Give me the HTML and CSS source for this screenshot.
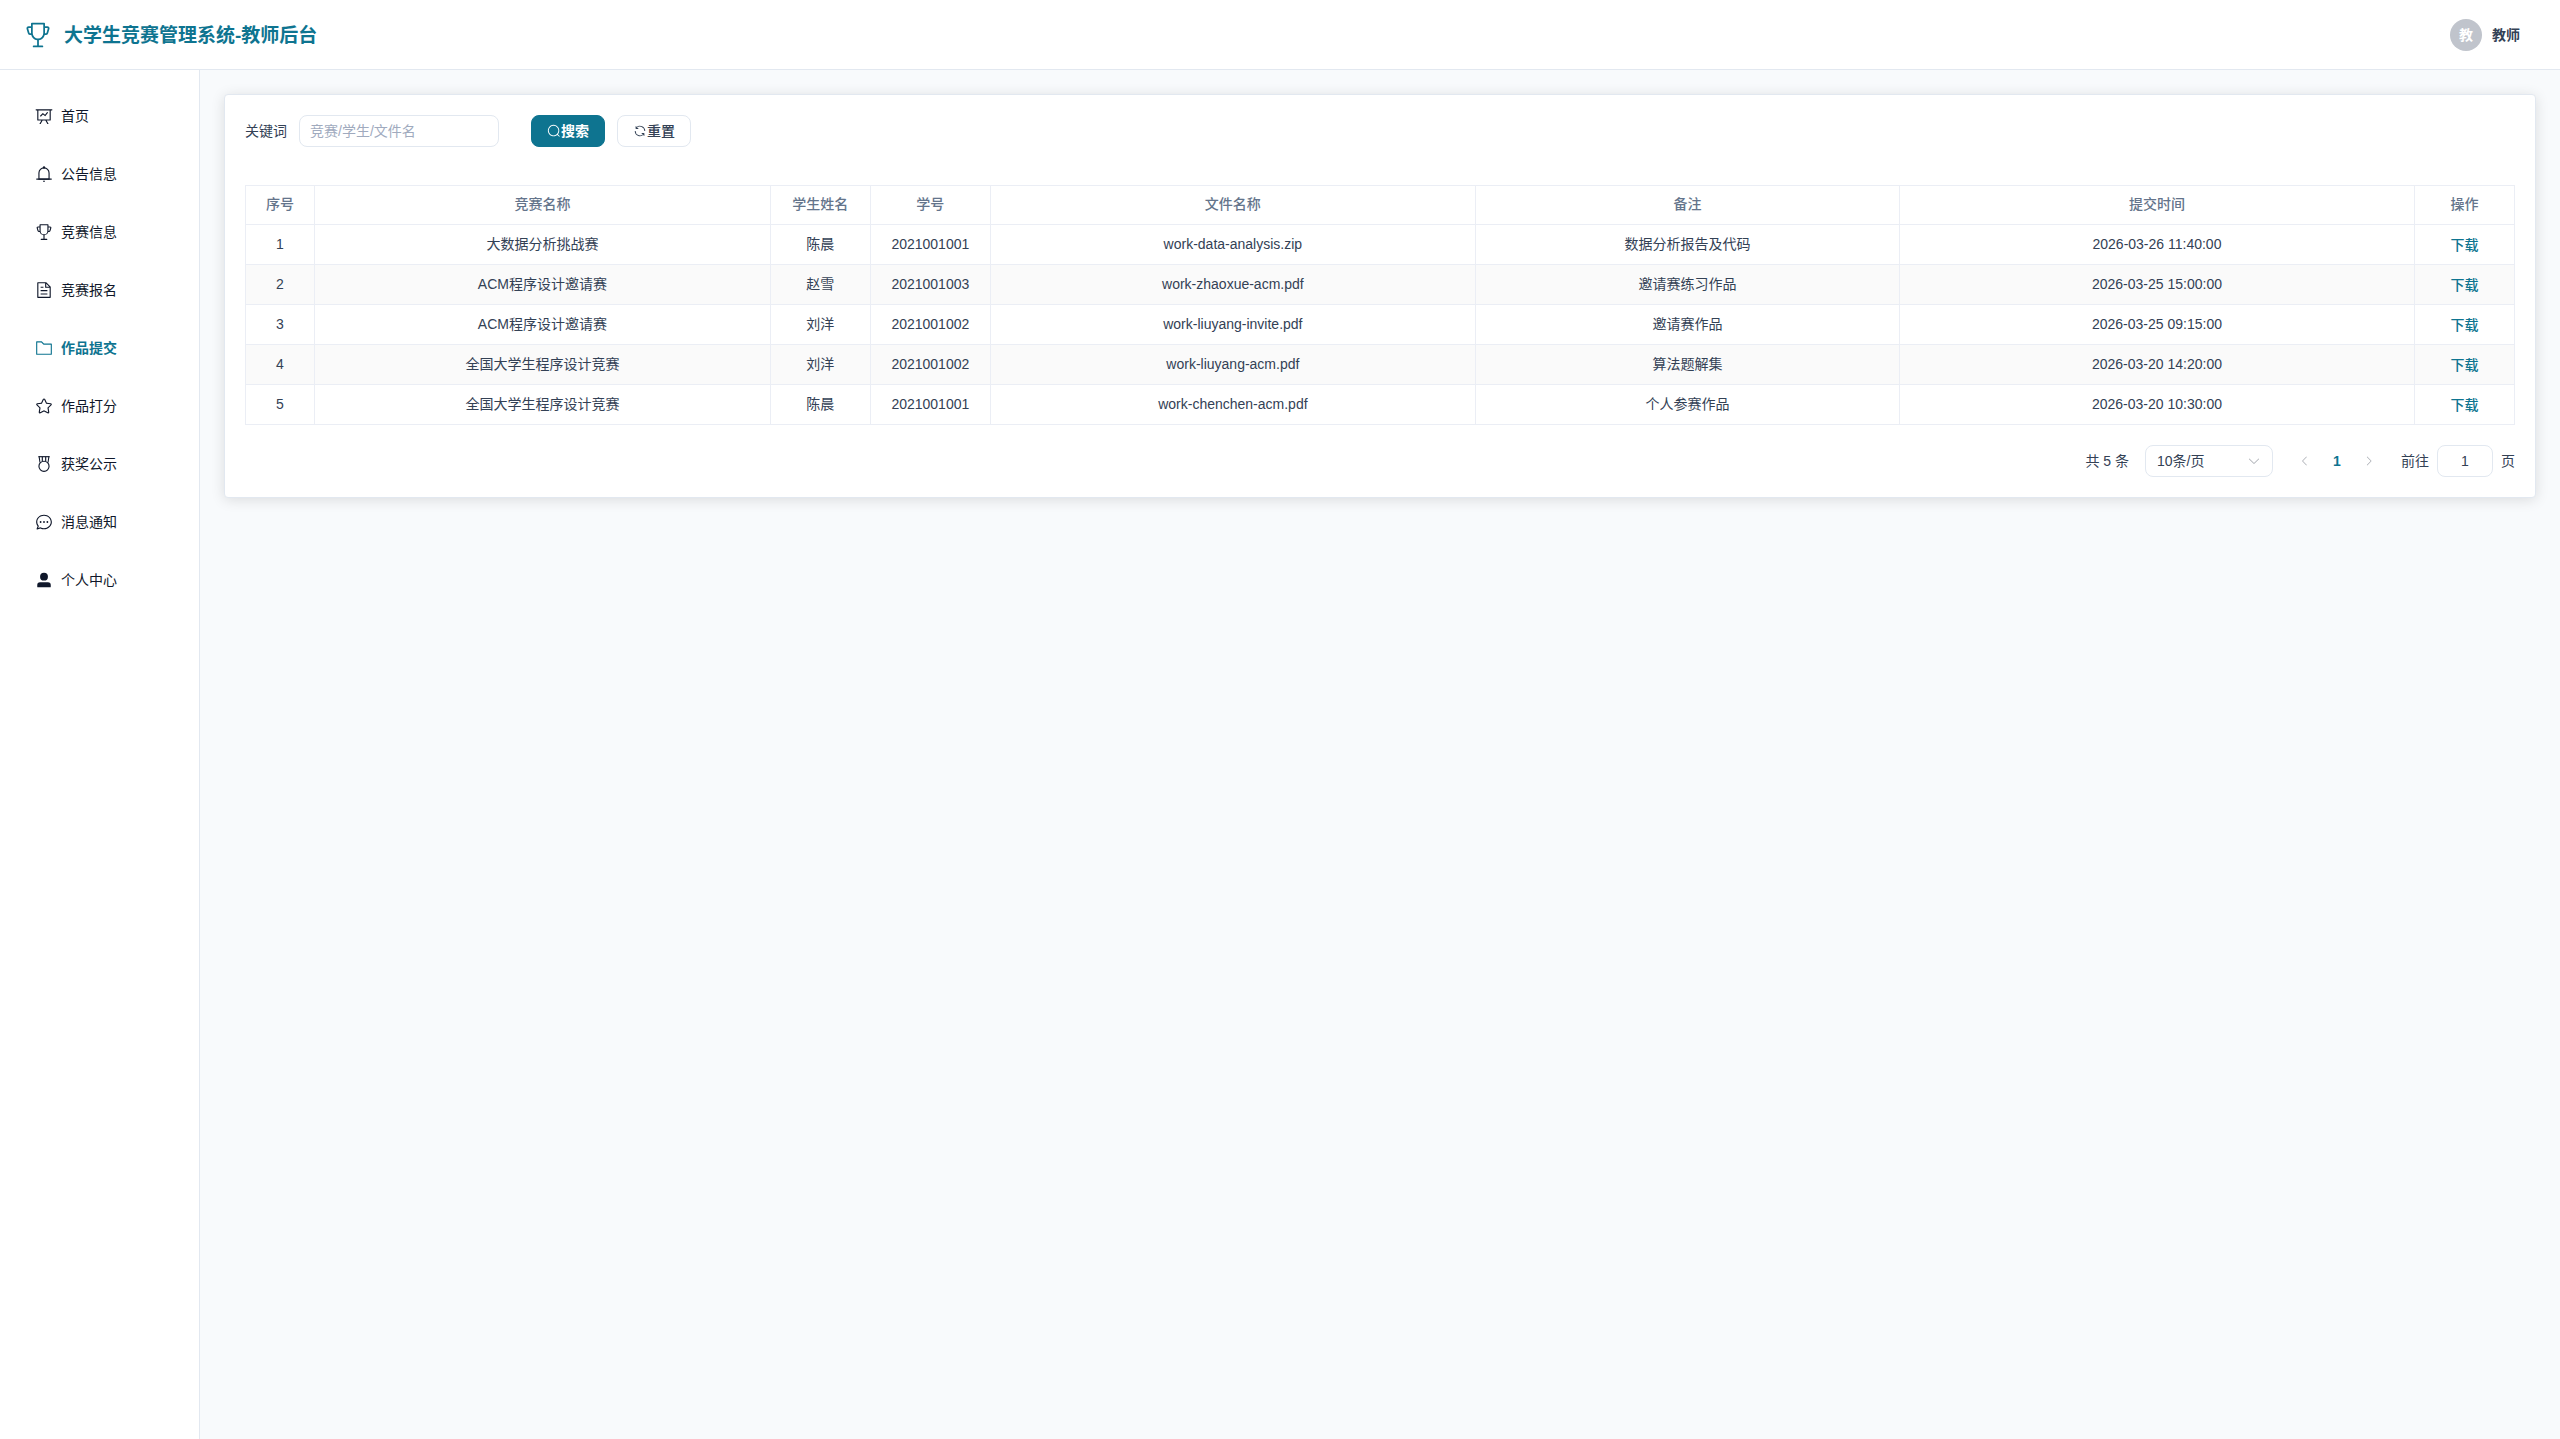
FILE: index.html
```html
<!DOCTYPE html>
<html lang="zh-CN">
<head>
<meta charset="utf-8">
<meta name="viewport" content="width=device-width, initial-scale=1">
<title>大学生竞赛管理系统-教师后台</title>
<link rel="stylesheet" href="styles.css">
</head>
<body>
<svg class="sprite" aria-hidden="true">
  <symbol id="trophy" viewBox="0 0 1024 1024"><path d="M480 896V702.08A256.256 256.256 0 0 1 264.064 512h-32.64a96 96 0 0 1-91.968-68.416L93.632 290.88a76.8 76.8 0 0 1 73.6-98.88H256V96a32 32 0 0 1 32-32h448a32 32 0 0 1 32 32v96h88.768a76.8 76.8 0 0 1 73.6 98.88L884.48 443.52A96 96 0 0 1 792.576 512h-32.64A256.256 256.256 0 0 1 544 702.08V896h128a32 32 0 1 1 0 64H352a32 32 0 1 1 0-64zm224-448V128H320v320a192 192 0 1 0 384 0m64 0h24.576a32 32 0 0 0 30.656-22.784l45.824-152.768A12.8 12.8 0 0 0 856.768 256H768zm-512 0V256h-88.768a12.8 12.8 0 0 0-12.288 16.448l45.824 152.768A32 32 0 0 0 231.424 448z"/></symbol>
  <symbol id="board" viewBox="0 0 1024 1024"><path d="M359.168 768H160a32 32 0 0 1-32-32V192H64a32 32 0 0 1 0-64h896a32 32 0 1 1 0 64h-64v544a32 32 0 0 1-32 32H665.216l110.848 192h-73.856L591.36 768H433.024L322.176 960H248.32zM832 192H192v512h640zM342.656 534.656a32 32 0 1 1-45.312-45.312L444.992 341.76l125.44 94.08L679.04 300.032a32 32 0 1 1 49.92 39.936L581.632 524.224 451.008 426.24 342.656 534.592z"/></symbol>
  <symbol id="bell" viewBox="0 0 1024 1024"><path d="M512 64a64 64 0 0 1 64 64v64H448v-64a64 64 0 0 1 64-64"/><path d="M256 768h512V448a256 256 0 1 0-512 0zm256-640a320 320 0 0 1 320 320v384H192V448a320 320 0 0 1 320-320"/><path d="M96 768h832q32 0 32 32t-32 32H96q-32 0-32-32t32-32m352 128h128a64 64 0 0 1-128 0"/></symbol>
  <symbol id="document" viewBox="0 0 1024 1024"><path d="M832 384H576V128H192v768h640zm-26.496-64L640 154.496V320zM160 64h480l256 256v608a32 32 0 0 1-32 32H160a32 32 0 0 1-32-32V96a32 32 0 0 1 32-32m160 448h384v64H320zm0-192h160v64H320zm0 384h384v64H320z"/></symbol>
  <symbol id="folder" viewBox="0 0 1024 1024"><path d="M128 192v640h768V320H485.76L357.504 192zm-32-64h287.872l128.384 128H928a32 32 0 0 1 32 32v576a32 32 0 0 1-32 32H96a32 32 0 0 1-32-32V160a32 32 0 0 1 32-32"/></symbol>
  <symbol id="star" viewBox="0 0 1024 1024"><path d="m512 747.84 228.16 119.936a6.4 6.4 0 0 0 9.28-6.72l-43.52-254.08 184.512-179.904a6.4 6.4 0 0 0-3.52-10.88l-255.104-37.12L517.76 147.904a6.4 6.4 0 0 0-11.52 0L392.192 379.072l-255.104 37.12a6.4 6.4 0 0 0-3.52 10.88L318.08 606.976l-43.584 254.08a6.4 6.4 0 0 0 9.28 6.72zM313.6 924.48a70.4 70.4 0 0 1-102.144-74.24l37.888-220.928L88.96 472.96A70.4 70.4 0 0 1 128 352.896l221.76-32.256 99.2-200.96a70.4 70.4 0 0 1 126.208 0l99.2 200.96 221.824 32.256a70.4 70.4 0 0 1 39.04 120.064L774.72 629.376l37.888 220.928a70.4 70.4 0 0 1-102.144 74.24L512 820.096l-198.4 104.32z"/></symbol>
  <symbol id="medal" viewBox="0 0 1024 1024"><path d="M512 896a256 256 0 1 0 0-512 256 256 0 0 0 0 512m0 64a320 320 0 1 1 0-640 320 320 0 0 1 0 640"/><path d="M198 64h628v64H198z"/><path d="M198 64h64l46 340-52 40z"/><path d="M826 64h-64l-46 340 52 40z"/><path d="M384 96h64v250h-64zM576 96h64v250h-64z"/></symbol>
  <symbol id="chat" viewBox="0 0 1024 1024"><path d="m174.72 855.68 135.296-45.12 23.68 11.84C388.096 849.536 448.576 864 512 864c211.84 0 384-166.784 384-352S723.84 160 512 160 128 326.784 128 512c0 69.12 24.96 139.264 70.848 199.232l22.08 28.8-46.272 115.584zm-45.248 82.56A32 32 0 0 1 89.6 896l58.368-145.92C94.72 680.32 64 596.864 64 512 64 299.904 256 96 512 96s448 203.904 448 416-192 416-448 416a461.06 461.06 0 0 1-206.912-48.384l-175.616 58.56z"/><path d="M512 563.2a51.2 51.2 0 1 1 0-102.4 51.2 51.2 0 0 1 0 102.4m192 0a51.2 51.2 0 1 1 0-102.4 51.2 51.2 0 0 1 0 102.4m-384 0a51.2 51.2 0 1 1 0-102.4 51.2 51.2 0 0 1 0 102.4"/></symbol>
  <symbol id="user" viewBox="0 0 1024 1024"><path d="M288 320a224 224 0 1 0 448 0 224 224 0 1 0-448 0m544 608H160a32 32 0 0 1-32-32v-96a160 160 0 0 1 160-160h448a160 160 0 0 1 160 160v96a32 32 0 0 1-32 32z"/></symbol>
  <symbol id="search" viewBox="0 0 1024 1024"><path d="m795.904 750.72 124.992 124.928a32 32 0 0 1-45.248 45.248L750.656 795.904a416 416 0 1 1 45.248-45.248zM480 832a352 352 0 1 0 0-704 352 352 0 0 0 0 704"/></symbol>
  <symbol id="refresh" viewBox="0 0 1024 1024"><path d="M771.776 794.88A384 384 0 0 1 128 512h64a320 320 0 0 0 555.712 216.448H654.72a32 32 0 1 1 0-64h149.056a32 32 0 0 1 32 32v148.928a32 32 0 1 1-64 0v-50.56zM276.288 295.616h92.992a32 32 0 0 1 0 64H220.16a32 32 0 0 1-32-32V178.56a32 32 0 0 1 64 0v50.56A384 384 0 0 1 896.128 512h-64a320 320 0 0 0-555.776-216.384z"/></symbol>
  <symbol id="arrow-left" viewBox="0 0 1024 1024"><path d="M609.408 149.376 277.76 489.6a32 32 0 0 0 0 44.672l331.648 340.352a29.12 29.12 0 0 0 41.728 0 30.59 30.59 0 0 0 0-42.752L339.264 511.936l311.872-319.872a30.59 30.59 0 0 0 0-42.688 29.12 29.12 0 0 0-41.728 0"/></symbol>
  <symbol id="arrow-right" viewBox="0 0 1024 1024"><path d="M340.864 149.312a30.59 30.59 0 0 0 0 42.752L652.736 512 340.864 831.872a30.59 30.59 0 0 0 0 42.752 29.12 29.12 0 0 0 41.728 0L714.24 534.336a32 32 0 0 0 0-44.672L382.592 149.376a29.12 29.12 0 0 0-41.728 0z"/></symbol>
  <symbol id="arrow-down" viewBox="0 0 1024 1024"><path d="M831.872 340.864 512 652.672 192.128 340.864a30.59 30.59 0 0 0-42.752 0 29.12 29.12 0 0 0 0 41.6L489.6 714.24a32 32 0 0 0 44.672 0l340.288-331.712a29.12 29.12 0 0 0 0-41.728 30.59 30.59 0 0 0-42.752 0z"/></symbol>
</svg>

<div class="app">
  <header class="header">
    <div class="brand">
      <svg class="brand-icon" aria-hidden="true"><use href="#trophy"/></svg>
      <h1 class="brand-title">大学生竞赛管理系统-教师后台</h1>
    </div>
    <div class="account">
      <span class="avatar">教</span>
      <span class="account-name">教师</span>
    </div>
  </header>

  <div class="body">
    <nav class="sidebar">
      <a class="menu-item" href="#"><svg class="menu-icon" aria-hidden="true"><use href="#board"/></svg>首页</a>
      <a class="menu-item" href="#"><svg class="menu-icon" aria-hidden="true"><use href="#bell"/></svg>公告信息</a>
      <a class="menu-item" href="#"><svg class="menu-icon" aria-hidden="true"><use href="#trophy"/></svg>竞赛信息</a>
      <a class="menu-item" href="#"><svg class="menu-icon" aria-hidden="true"><use href="#document"/></svg>竞赛报名</a>
      <a class="menu-item is-active" href="#" aria-current="page"><svg class="menu-icon" aria-hidden="true"><use href="#folder"/></svg>作品提交</a>
      <a class="menu-item" href="#"><svg class="menu-icon" aria-hidden="true"><use href="#star"/></svg>作品打分</a>
      <a class="menu-item" href="#"><svg class="menu-icon" aria-hidden="true"><use href="#medal"/></svg>获奖公示</a>
      <a class="menu-item" href="#"><svg class="menu-icon" aria-hidden="true"><use href="#chat"/></svg>消息通知</a>
      <a class="menu-item" href="#"><svg class="menu-icon" aria-hidden="true"><use href="#user"/></svg>个人中心</a>
    </nav>

    <main class="main">
      <section class="card">
        <form class="filters">
          <div class="field">
            <label for="keyword">关键词</label>
            <input class="control keyword" id="keyword" type="text" placeholder="竞赛/学生/文件名">
          </div>
          <div class="actions">
            <button class="button button-primary" type="button"><svg class="button-icon" aria-hidden="true"><use href="#search"/></svg>搜索</button>
            <button class="button" type="reset"><svg class="button-icon" aria-hidden="true"><use href="#refresh"/></svg>重置</button>
          </div>
        </form>

        <table class="table">
          <colgroup>
            <col class="col-index"><col class="col-contest"><col class="col-student"><col class="col-number"><col class="col-file"><col class="col-remark"><col class="col-time"><col class="col-action">
          </colgroup>
          <thead>
            <tr><th>序号</th><th>竞赛名称</th><th>学生姓名</th><th>学号</th><th>文件名称</th><th>备注</th><th>提交时间</th><th>操作</th></tr>
          </thead>
          <tbody>
            <tr><td>1</td><td>大数据分析挑战赛</td><td>陈晨</td><td>2021001001</td><td>work-data-analysis.zip</td><td>数据分析报告及代码</td><td>2026-03-26 11:40:00</td><td><a class="link" href="#">下载</a></td></tr>
            <tr><td>2</td><td>ACM程序设计邀请赛</td><td>赵雪</td><td>2021001003</td><td>work-zhaoxue-acm.pdf</td><td>邀请赛练习作品</td><td>2026-03-25 15:00:00</td><td><a class="link" href="#">下载</a></td></tr>
            <tr><td>3</td><td>ACM程序设计邀请赛</td><td>刘洋</td><td>2021001002</td><td>work-liuyang-invite.pdf</td><td>邀请赛作品</td><td>2026-03-25 09:15:00</td><td><a class="link" href="#">下载</a></td></tr>
            <tr><td>4</td><td>全国大学生程序设计竞赛</td><td>刘洋</td><td>2021001002</td><td>work-liuyang-acm.pdf</td><td>算法题解集</td><td>2026-03-20 14:20:00</td><td><a class="link" href="#">下载</a></td></tr>
            <tr><td>5</td><td>全国大学生程序设计竞赛</td><td>陈晨</td><td>2021001001</td><td>work-chenchen-acm.pdf</td><td>个人参赛作品</td><td>2026-03-20 10:30:00</td><td><a class="link" href="#">下载</a></td></tr>
          </tbody>
        </table>

        <div class="pagination">
          <span>共 5 条</span>
          <div class="select-wrap">
            <select class="control page-size" aria-label="每页条数">
              <option>10条/页</option>
            </select>
            <svg class="select-arrow" aria-hidden="true"><use href="#arrow-down"/></svg>
          </div>
          <div class="pager">
            <button class="page" type="button" disabled aria-label="上一页"><svg class="page-icon" aria-hidden="true"><use href="#arrow-left"/></svg></button>
            <button class="page is-current" type="button">1</button>
            <button class="page" type="button" disabled aria-label="下一页"><svg class="page-icon" aria-hidden="true"><use href="#arrow-right"/></svg></button>
          </div>
          <div class="jump">
            <label for="jump">前往</label>
            <input class="control jump-input" id="jump" type="text" value="1">
            <span>页</span>
          </div>
        </div>
      </section>
    </main>
  </div>
</div>
</body>
</html>
```
FILE: styles.css
```css
:root {
  --primary: #0e7490;
  --text: #334155;
  --heading: #64748b;
  --ink: #0f172a;
  --line: #e2e8f0;
  --table-line: #ebeef5;
}

* {
  box-sizing: border-box;
}

body {
  margin: 0;
  background: #f8fafc;
  color: var(--text);
  font: 14px/22px "Liberation Sans", "Noto Sans CJK SC", sans-serif;
}

button,
input,
select {
  font: inherit;
  color: inherit;
}

svg {
  display: block;
  flex: none;
  fill: currentColor;
}

.sprite {
  position: absolute;
  width: 0;
  height: 0;
}

.app {
  display: flex;
  flex-direction: column;
  min-height: 100vh;
}

.header {
  display: flex;
  align-items: center;
  justify-content: space-between;
  height: 70px;
  padding: 0 40px 0 24px;
  background: #fff;
  border-bottom: 1px solid var(--line);
}

.brand {
  display: flex;
  align-items: center;
  gap: 12px;
  color: var(--primary);
}

.brand-icon {
  width: 28px;
  height: 28px;
}

.brand-title {
  margin: 0;
  padding-top: 2px;
  font-size: 19px;
  line-height: 28px;
  font-weight: 700;
}

.account {
  display: flex;
  align-items: center;
  gap: 10px;
  font-weight: 700;
}

.avatar {
  display: flex;
  align-items: center;
  justify-content: center;
  width: 32px;
  height: 32px;
  border-radius: 50%;
  background: #c0c4cc;
  color: #fff;
}

.body {
  display: flex;
  flex: 1;
}

.sidebar {
  display: flex;
  flex: none;
  flex-direction: column;
  gap: 8px;
  width: 200px;
  padding: 21px 15px;
  background: #fff;
  border-right: 1px solid var(--line);
}

.menu-item {
  display: flex;
  align-items: center;
  gap: 8px;
  height: 50px;
  padding: 0 20px;
  color: var(--ink);
  text-decoration: none;
}

.menu-item.is-active {
  color: var(--primary);
  font-weight: 700;
}

.menu-icon {
  width: 18px;
  height: 18px;
}

.main {
  flex: 1;
  min-width: 0;
  padding: 24px;
}

.card {
  padding: 20px;
  background: #fff;
  border: 1px solid var(--line);
  border-radius: 4px;
  box-shadow: 0 2px 14px rgba(0, 0, 0, 0.12);
}

.filters {
  display: flex;
  gap: 32px;
  margin-bottom: 38px;
}

.field {
  display: flex;
  align-items: center;
  gap: 12px;
}

.control {
  height: 32px;
  padding: 0 11px;
  background: #fff;
  border: 1px solid var(--line);
  border-radius: 8px;
}

.keyword {
  width: 200px;
  padding: 0 10px;
}

.keyword::placeholder {
  color: #a0aabe;
}

.actions {
  display: flex;
  gap: 12px;
}

.button {
  display: flex;
  align-items: center;
  height: 32px;
  padding: 0 15px;
  background: #fff;
  border: 1px solid var(--line);
  border-radius: 8px;
  font-weight: 500;
}

.button-primary {
  background: var(--primary);
  border-color: var(--primary);
  color: #fff;
  font-weight: 700;
}

.button-icon {
  width: 14px;
  height: 14px;
}

.table {
  width: 100%;
  table-layout: fixed;
  border-collapse: separate;
  border-spacing: 0;
  border-top: 1px solid var(--table-line);
  text-align: center;
}

.table th,
.table td {
  height: 40px;
  padding: 0 8px 2px;
  border-right: 1px solid var(--table-line);
  border-bottom: 1px solid var(--table-line);
}

.table th {
  height: 39px;
  color: var(--heading);
  font-weight: 500;
}

.table th:first-child,
.table td:first-child {
  border-left: 1px solid var(--table-line);
}

.table td:last-child {
  padding-bottom: 0;
}

.table tbody tr:nth-child(even) {
  background: #fafafa;
}

.col-index {
  width: 70px;
}

.col-student,
.col-action {
  width: 100px;
}

.col-number {
  width: 120px;
}

.col-file {
  width: 21.37%;
}

.col-remark {
  width: 18.68%;
}

.col-time {
  width: 22.69%;
}

.link {
  color: var(--primary);
  font-weight: 500;
  text-decoration: none;
}

.pagination {
  display: flex;
  align-items: center;
  justify-content: flex-end;
  gap: 16px;
  margin-top: 20px;
}

.select-wrap {
  position: relative;
}

.page-size {
  display: block;
  width: 128px;
  appearance: none;
}

.select-arrow {
  position: absolute;
  top: 9px;
  right: 12px;
  width: 14px;
  height: 14px;
  color: #a8abb2;
  pointer-events: none;
}

.pager {
  display: flex;
}

.page {
  display: flex;
  align-items: center;
  justify-content: center;
  width: 32px;
  height: 32px;
  padding: 0;
  background: none;
  border: 0;
}

.page:disabled {
  color: #a8abb2;
}

.page.is-current {
  color: var(--primary);
  font-weight: 700;
}

.page-icon {
  width: 12px;
  height: 12px;
}

.jump {
  display: flex;
  align-items: center;
  gap: 8px;
}

.jump-input {
  width: 56px;
  text-align: center;
}
```
